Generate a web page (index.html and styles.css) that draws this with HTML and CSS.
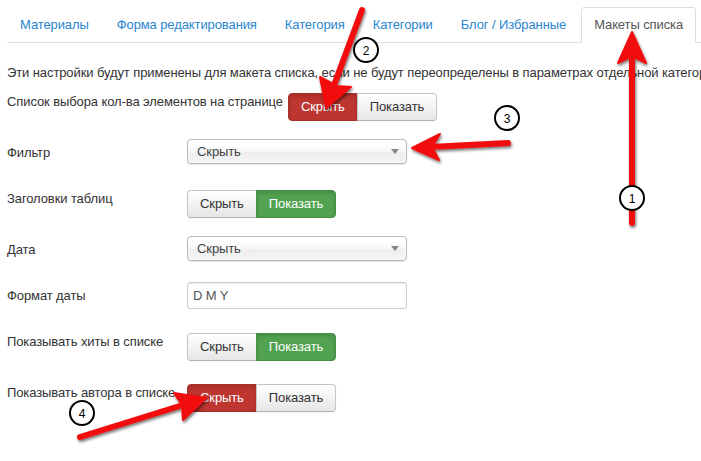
FILE: index.html
```html
<!DOCTYPE html>
<html>
<head>
  <meta charset="utf-8">
  <title>Макеты списка</title>
  <link rel="stylesheet" href="styles.css">
</head>
<body>
  <div class="page">
    <ul class="tabs">
      <li><a>Материалы</a></li>
      <li><a>Форма редактирования</a></li>
      <li><a>Категория</a></li>
      <li><a>Категории</a></li>
      <li><a>Блог / Избранные</a></li>
      <li class="active"><a>Макеты списка</a></li>
    </ul>

    <p class="intro">Эти настройки будут применены для макета списка, если не будут переопределены в параметрах отдельной категории.</p>

    <div class="form">
      <div class="control-group tight">
        <label class="control-label">Список выбора кол-ва элементов на странице</label>
        <div class="btn-group">
          <span class="btn btn-danger">Скрыть</span>
          <span class="btn">Показать</span>
        </div>
      </div>

      <div class="control-group field">
        <label class="control-label">Фильтр</label>
        <div class="select"><span>Скрыть</span><i class="caret"></i></div>
      </div>

      <div class="control-group tight">
        <label class="control-label">Заголовки таблиц</label>
        <div class="btn-group">
          <span class="btn">Скрыть</span>
          <span class="btn btn-success">Показать</span>
        </div>
      </div>

      <div class="control-group field tight">
        <label class="control-label">Дата</label>
        <div class="select"><span>Скрыть</span><i class="caret"></i></div>
      </div>

      <div class="control-group field">
        <label class="control-label">Формат даты</label>
        <div class="input">D M Y</div>
      </div>

      <div class="control-group">
        <label class="control-label">Показывать хиты в списке</label>
        <div class="btn-group">
          <span class="btn">Скрыть</span>
          <span class="btn btn-success">Показать</span>
        </div>
      </div>

      <div class="control-group">
        <label class="control-label">Показывать автора в списке</label>
        <div class="btn-group">
          <span class="btn btn-danger">Скрыть</span>
          <span class="btn">Показать</span>
        </div>
      </div>
    </div>

    <!-- annotation arrows drawn over the form -->
    <svg class="marks" width="701" height="461" viewBox="0 0 701 461">
      <defs>
        <filter id="shadow" x="-20%" y="-20%" width="140%" height="140%">
          <feDropShadow dx="1" dy="2" stdDeviation="1.5" flood-color="#000" flood-opacity="0.55"/>
        </filter>
      </defs>

      <g class="arrow" filter="url(#shadow)">
        <line x1="632" y1="223" x2="632" y2="52"/>
        <polygon points="632,32 646,63 632,56 618,63"/>
      </g>
      <g class="arrow" filter="url(#shadow)">
        <line x1="362" y1="10" x2="333" y2="88"/>
        <polygon points="326,108 351,87 337,86 320,77"/>
      </g>
      <g class="arrow" filter="url(#shadow)">
        <line x1="508" y1="143" x2="430" y2="147"/>
        <polygon points="412,148 440,134 432,147 439,160"/>
      </g>
      <g class="arrow" filter="url(#shadow)">
        <line x1="80" y1="437" x2="186" y2="404"/>
        <polygon points="206,398 174,393 182,405 183,420"/>
      </g>

      <g class="num">
        <circle cx="632" cy="198" r="12"/>
        <text x="632" y="202.5">1</text>
        <circle cx="366" cy="50" r="12"/>
        <text x="366" y="54.5">2</text>
        <circle cx="507" cy="118" r="12"/>
        <text x="507" y="122.5">3</text>
        <circle cx="82" cy="413" r="12"/>
        <text x="82" y="417.5">4</text>
      </g>
    </svg>
  </div>
</body>
</html>
```

FILE: styles.css
```css
body {
  margin: 0;
  background: #fff;
  font-family: "Liberation Sans", Arial, sans-serif;
  font-size: 13px;
  letter-spacing: -0.1px;
  color: #333;
  overflow: hidden;
}

.page {
  position: relative;
  width: 701px;
  height: 461px;
  padding: 7px 0 0 7px;
  box-sizing: border-box;
}

/* tabs */
.tabs {
  display: flex;
  list-style: none;
  margin: 0;
  padding: 0;
  border-bottom: 1px solid #ddd;
  white-space: nowrap;
}
.tabs li {
  margin-right: 2px;
  margin-bottom: -1px;
}
.tabs a {
  display: block;
  padding: 7px 12px;
  line-height: 20px;
  color: #2a86cf;
  border: 1px solid transparent;
  border-radius: 4px 4px 0 0;
}
.tabs .active a {
  color: #555;
  background: #fff;
  border-color: #ddd #ddd transparent;
}

.intro {
  margin: 21px 0 11px;
  line-height: 18px;
  white-space: nowrap;
  overflow: hidden;
}

/* form rows */
.control-group {
  display: flex;
  align-items: flex-start;
  min-height: 28px;
  margin-bottom: 23px;
}
.control-group.tight {
  margin-bottom: 18px;
}
.control-label {
  min-width: 180px;
  box-sizing: border-box;
  padding-right: 5px;
  line-height: 18px;
  white-space: nowrap;
}
.field .control-label {
  padding-top: 5px;
}

/* buttons */
.btn-group {
  display: flex;
}
.btn {
  display: inline-block;
  padding: 4px 12px;
  line-height: 18px;
  color: #333;
  border: 1px solid #c5c5c5;
  border-bottom-color: #b3b3b3;
  background: linear-gradient(#fff, #e6e6e6);
  box-shadow: inset 0 1px 0 rgba(255,255,255,.2), 0 1px 2px rgba(0,0,0,.05);
}
.btn:first-child {
  border-radius: 4px 0 0 4px;
}
.btn:last-child {
  border-radius: 0 4px 4px 0;
  margin-left: -1px;
}
.btn-danger {
  color: #fff;
  background: #bd362f;
  border-color: #a52f29;
  box-shadow: inset 0 2px 4px rgba(0,0,0,.15);
}
.btn-success {
  color: #fff;
  background: #51a351;
  border-color: #449044;
  box-shadow: inset 0 2px 4px rgba(0,0,0,.15);
}

/* select and input */
.select {
  display: flex;
  align-items: center;
  justify-content: space-between;
  width: 220px;
  height: 25px;
  box-sizing: border-box;
  padding: 0 7px 0 9px;
  color: #444;
  border: 1px solid #b8b8b8;
  border-radius: 4px;
  background: linear-gradient(#fff 20%, #f6f6f6 50%, #eee 52%, #f4f4f4);
  box-shadow: 0 0 3px #fff inset, 0 1px 1px rgba(0,0,0,.1);
}
.caret {
  width: 0;
  height: 0;
  border-top: 5px solid #888;
  border-left: 4px solid transparent;
  border-right: 4px solid transparent;
}
.input {
  width: 220px;
  height: 27px;
  box-sizing: border-box;
  padding-left: 5px;
  line-height: 25px;
  color: #555;
  border: 1px solid #ccc;
  border-radius: 3px;
  box-shadow: inset 0 1px 1px rgba(0,0,0,.075);
}

/* annotation overlay */
.marks {
  position: absolute;
  top: 0;
  left: 0;
  pointer-events: none;
}
.arrow line {
  stroke: #f10d0d;
  stroke-width: 6;
  stroke-linecap: round;
}
.arrow polygon {
  fill: #f10d0d;
  stroke: #f10d0d;
  stroke-width: 2;
  stroke-linejoin: round;
}
.num circle {
  fill: #fff;
  stroke: #000;
  stroke-width: 2;
}
.num text {
  font-family: "Liberation Sans", Arial, sans-serif;
  font-size: 12px;
  letter-spacing: 0;
  text-anchor: middle;
  fill: #000;
}
```
